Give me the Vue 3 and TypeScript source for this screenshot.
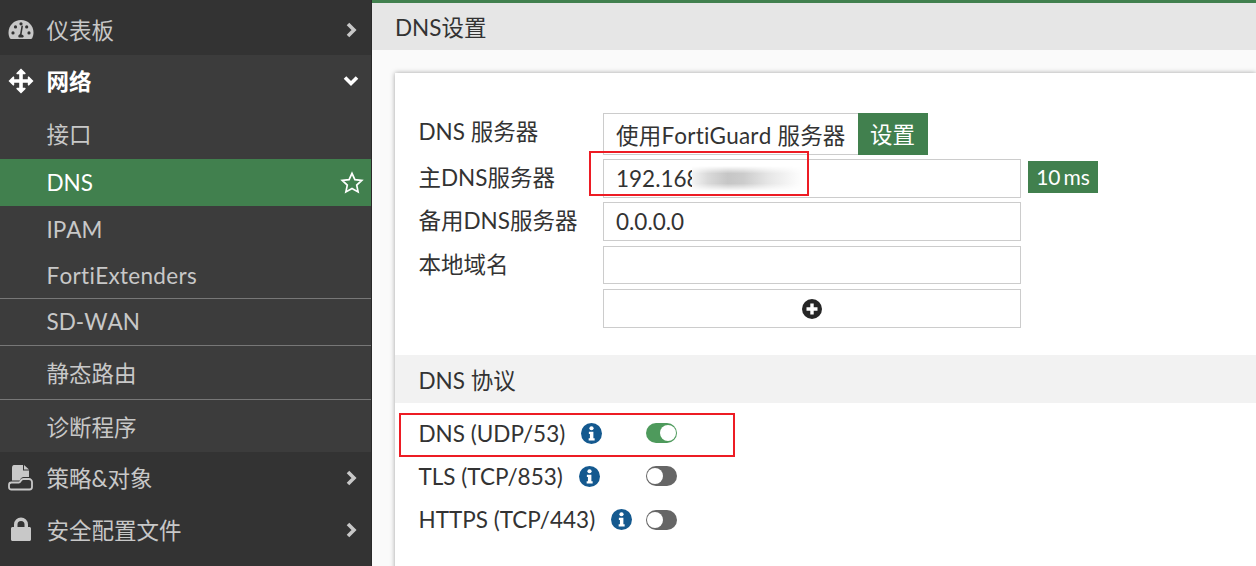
<script setup lang="ts">
interface SubItem {
  label: string
  height: number
  active?: boolean
  divider?: boolean
  wide?: boolean
}

const subItems: SubItem[] = [
  { label: '接口', height: 52 },
  { label: 'DNS', height: 47, active: true },
  { label: 'IPAM', height: 47 },
  { label: 'FortiExtenders', height: 46, divider: true, wide: true },
  { label: 'SD-WAN', height: 47, divider: true },
  { label: '静态路由', height: 54, divider: true },
  { label: '诊断程序', height: 52 },
]

const protocols = [
  { label: 'DNS (UDP/53)', on: true },
  { label: 'TLS (TCP/853)', on: false },
  { label: 'HTTPS (TCP/443)', on: false },
]
</script>

<template>
  <div class="page">
    <aside class="sidebar">
      <div class="nav-top">
        <svg class="nav-icon" viewBox="0 0 26 22">
          <path fill="#c8c8c8" fill-rule="evenodd" d="M13 1C6 1 .5 6.500.5 13.500c0 2 .5 4 1.300 5.700.3.600.8.800 1.400.8h19.600c.6 0 1.100-.2 1.400-.8.800-1.700 1.300-3.700 1.300-5.700C25.500 6.500 20 1 13 1zM5 15.500a1.600 1.600 0 1 1 0-3.200 1.600 1.600 0 0 1 0 3.200zm2.500-6a1.600 1.600 0 1 1 0-3.200 1.600 1.600 0 0 1 0 3.200zM13 6.400a1.600 1.600 0 1 1 0-3.200 1.600 1.600 0 0 1 0 3.200zm2.700 11.100c0 .5-.4.900-.9.900h-3.600c-.5 0-.9-.4-.9-.9 0-1 .7-1.900 1.700-2.200l1.400-8.100c.1-.4.500-.7.900-.6.400.1.700.5.600.9l-1.300 7.900c1.200.2 2.100 1 2.100 2.100zm3-8a1.600 1.600 0 1 1 0-3.200 1.600 1.600 0 0 1 0 3.200zm2.300 6a1.600 1.600 0 1 1 0-3.200 1.600 1.600 0 0 1 0 3.200z" />
        </svg>
        <span class="nav-label">仪表板</span>
        <svg class="chevron" viewBox="0 0 12 16"><path d="M3 2l6 6-6 6" /></svg>
      </div>

      <div class="nav-group">
        <div class="nav-head">
          <svg class="nav-icon" viewBox="0 0 26 26">
            <path fill="#fff" d="M13 .5l4.800 4.800-.7.900h-2.300v5h5v-2.300l.9-.7 4.800 4.800-4.800 4.800-.9-.7v-2.300h-5v5h2.300l.7.900-4.800 4.800-4.800-4.800.7-.9h2.300v-5h-5v2.300l-.9.700L.5 13l4.800-4.800.9.700v2.300h5v-5H8.900l-.7-.9z" />
          </svg>
          <span class="nav-label strong">网络</span>
          <svg class="chevron open" viewBox="0 0 16 12"><path d="M2 2.500l6 6 6-6" /></svg>
        </div>
        <div
          v-for="item in subItems"
          :key="item.label"
          class="sub"
          :class="{ active: item.active, divider: item.divider, wide: item.wide }"
          :style="{ height: item.height + 'px' }"
        >
          <span>{{ item.label }}</span>
          <svg v-if="item.active" class="star" viewBox="0 0 24 24">
            <path d="M12 2.300l2.900 6.300 6.900.8-5.100 4.700 1.400 6.800-6.100-3.400-6.100 3.400 1.400-6.800-5.100-4.700 6.900-.8z" />
          </svg>
        </div>
      </div>

      <div class="nav-row">
        <svg class="nav-icon" viewBox="0 0 26 26">
          <path fill="#c8c8c8" d="M4 3c0-1.500.5-3 2-3h9v5.500h6V12h-5.500c-1.500 0-2.500 1-3 2l-.5 1.500H4zM16 0l5 4.500h-5z" />
          <path fill="none" stroke="#c8c8c8" stroke-width="1.800" d="M3.500 17.500h7.500c1 0 1.500-1 2-2 .5-1 1.500-1.500 2.500-1.500h5.500c1.500 0 3 1.500 3 3v5c0 1.500-1 2.500-2.500 2.500H3c-1.500 0-2-1-2-2.500v-2c0-1.500 1-2.500 2.500-2.500z" />
        </svg>
        <span class="nav-label">策略&amp;对象</span>
        <svg class="chevron" viewBox="0 0 12 16"><path d="M3 2l6 6-6 6" /></svg>
      </div>
      <div class="nav-row">
        <svg class="nav-icon" viewBox="0 0 26 26">
          <path fill="#c8c8c8" fill-rule="evenodd" d="M6 10V7.500a7 7 0 0 1 14 0V10h1.500c.8 0 1.500.7 1.500 1.500v11c0 .8-.7 1.500-1.500 1.500h-17c-.8 0-1.500-.7-1.500-1.500v-11C3 10.700 3.700 10 4.500 10zm3.500 0h7V7.500a3.500 3.500 0 0 0-7 0z" />
        </svg>
        <span class="nav-label">安全配置文件</span>
        <svg class="chevron" viewBox="0 0 12 16"><path d="M3 2l6 6-6 6" /></svg>
      </div>
    </aside>

    <main class="main">
      <header class="title">DNS设置</header>
      <section class="panel">
        <div class="form">
          <div class="row row-mode">
            <label>DNS 服务器</label>
            <div class="mode">
              <span class="mode-option">使用FortiGuard 服务器</span>
              <span class="mode-btn">设置</span>
            </div>
          </div>
          <div class="row">
            <label>主DNS服务器</label>
            <div class="input">192.168</div>
            <span class="latency">10 ms</span>
            <i class="smudge" />
            <i class="red-box box-ip" />
          </div>
          <div class="row">
            <label>备用DNS服务器</label>
            <div class="input">0.0.0.0</div>
          </div>
          <div class="row row-domain">
            <label>本地域名</label>
            <div class="input" />
          </div>
          <div class="row">
            <label />
            <div class="input add">
              <svg viewBox="0 0 20 20" width="20" height="20">
                <circle cx="10" cy="10" r="10" fill="#262626" />
                <path d="M10 4.500v11M4.500 10h11" stroke="#fff" stroke-width="3.400" />
              </svg>
            </div>
          </div>
        </div>

        <h2 class="section">DNS 协议</h2>

        <div class="protocols">
          <div v-for="p in protocols" :key="p.label" class="proto">
            <span class="proto-label">{{ p.label }}</span>
            <svg class="info" viewBox="0 0 20 20">
              <circle cx="10" cy="10" r="10" fill="#14598f" />
              <circle cx="10" cy="5" r="2" fill="#fff" />
              <path fill="#fff" d="M7.500 8.300h4.300v6.200h1.200v2.200H7.300v-2.200h1.200v-4H7.500z" />
            </svg>
            <span class="spacer" />
            <span class="toggle" :class="{ on: p.on }"><i /></span>
          </div>
          <i class="red-box box-proto" />
        </div>
      </section>
    </main>
  </div>
</template>

<style>
html,
body {
  margin: 0;
  background: #fafafa;
  overflow: hidden;
}
</style>

<style scoped>
.page {
  display: flex;
  width: 1256px;
  height: 566px;
  overflow: hidden;
  font-family: Lato, "Noto Sans CJK SC", sans-serif;
  font-size: 22.5px;
  font-variant-ligatures: none;
  color: #333;
}

.sidebar {
  flex: 0 0 372px;
  box-sizing: border-box;
  height: 566px;
  background: #333;
  color: #c8c8c8;
  border-right: 1px solid #2a2a2a;
}

.nav-top,
.nav-row,
.nav-head {
  display: flex;
  align-items: center;
  padding-left: 8px;
}

.nav-top {
  height: 55px;
  padding-top: 4px;
  box-sizing: border-box;
}

.nav-row {
  height: 52px;
}

.nav-icon {
  flex: 0 0 26px;
  width: 26px;
  height: 26px;
}

.nav-label {
  margin-left: 12.500px;
  padding-bottom: 2px;
  flex: 1;
}

.strong {
  font-weight: 700;
  color: #fff;
}

.chevron {
  flex: none;
  width: 12px;
  height: 16px;
  margin-right: 14px;
  fill: none;
  stroke: #c8c8c8;
  stroke-width: 3.600;
}

.chevron.open {
  width: 16px;
  height: 12px;
  margin-right: 12px;
  stroke: #fff;
}

.nav-group {
  background: #3c3c3c;
  height: 397px;
}

.nav-head {
  height: 52px;
}

.sub {
  display: flex;
  align-items: center;
  justify-content: space-between;
  box-sizing: border-box;
  padding-left: 46.500px;
  padding-right: 7px;
  font-kerning: none;
}

.sub.active {
  background: #41804e;
  color: #fff;
}

.sub.divider {
  padding-bottom: 1px;
  border-bottom: 1px solid #777;
}

.sub.wide {
  letter-spacing: 0.300px;
}

.star {
  width: 24px;
  height: 24px;
  fill: none;
  stroke: #fff;
  stroke-width: 1.700;
}

.main {
  flex: 1;
  min-width: 0;
  border-top: 3px solid #41804e;
}

.title {
  height: 47px;
  line-height: 49px;
  padding-left: 23px;
  background: #e6e6e6;
}

.panel {
  margin: 23px 0 0 23px;
  height: 500px;
  background: #fff;
  box-shadow: 0 0 5px rgba(0, 0, 0, 0.35);
}

.form {
  padding: 40px 0 0 23.500px;
  display: flex;
  flex-direction: column;
  gap: 4px;
}

.row {
  position: relative;
  display: flex;
  align-items: center;
}

.row label {
  flex: 0 0 184.500px;
  line-height: 36px;
  padding-bottom: 1px;
}

.row-mode label {
  padding-bottom: 4px;
}

.input {
  box-sizing: border-box;
  width: 418px;
  height: 39px;
  line-height: 37px;
  padding-left: 12px;
  background: #fff;
  border: 1px solid #ccc;
}

.row-domain {
  margin: 1px 0;
  align-items: flex-start;
}

.row-domain label {
  padding: 1px 0 0;
}

.row-domain .input {
  height: 38px;
}

.add {
  display: flex;
  align-items: center;
  justify-content: center;
  padding: 0;
}

.mode {
  display: flex;
  height: 42px;
}

.mode-option {
  box-sizing: border-box;
  padding: 0 12px;
  line-height: 43px;
  font-kerning: none;
  letter-spacing: 0.200px;
  border: 1px solid #ccc;
  border-right: 0;
}

.mode-btn {
  width: 70px;
  line-height: 44px;
  text-align: center;
  color: #fff;
  background: #41804e;
}

.latency {
  align-self: flex-start;
  margin: 2px 0 0 7px;
  box-sizing: border-box;
  width: 70px;
  height: 32px;
  line-height: 32px;
  text-align: center;
  font-size: 21px;
  word-spacing: -2.500px;
  color: #fff;
  background: #41804e;
}

.smudge {
  position: absolute;
  left: 273px;
  top: 7px;
  width: 112px;
  height: 25px;
  background: #fff;
}

.smudge::before {
  content: "";
  position: absolute;
  inset: 0;
  background: linear-gradient(90deg, #f4f4f4, #dadada 14%, #c6c6c6 32%, #cccccc 46%, #e6e6e6 68%, #f6f6f6 88%, #fff);
  -webkit-mask-image: linear-gradient(180deg, transparent, #000 30%, #000 70%, transparent);
  mask-image: linear-gradient(180deg, transparent, #000 30%, #000 70%, transparent);
}

.red-box {
  position: absolute;
  border: 2px solid #ed1c24;
  pointer-events: none;
}

.box-ip {
  left: 170px;
  top: -8px;
  width: 216px;
  height: 41px;
}

.box-proto {
  left: 4px;
  top: 10px;
  width: 332px;
  height: 40px;
}

.section {
  margin: 27px 0 0;
  height: 48px;
  padding-left: 23.500px;
  font: inherit;
  line-height: 52px;
  background: #f2f2f2;
}

.protocols {
  position: relative;
  padding: 8.500px 0 0 23.500px;
  width: 258.500px;
}

.proto {
  display: flex;
  align-items: center;
  height: 43.250px;
}

.info {
  margin-left: 16px;
  width: 21px;
  height: 21px;
}

.spacer {
  flex: 1;
}

.toggle {
  position: relative;
  box-sizing: border-box;
  width: 31px;
  height: 20px;
  border-radius: 10px;
  background: #666;
}

.toggle i {
  position: absolute;
  left: 1px;
  top: 2px;
  width: 16px;
  height: 16px;
  border-radius: 50%;
  background: #fff;
}

.toggle.on {
  background: #4e9a5c;
}

.toggle.on i {
  left: 14px;
}
</style>
